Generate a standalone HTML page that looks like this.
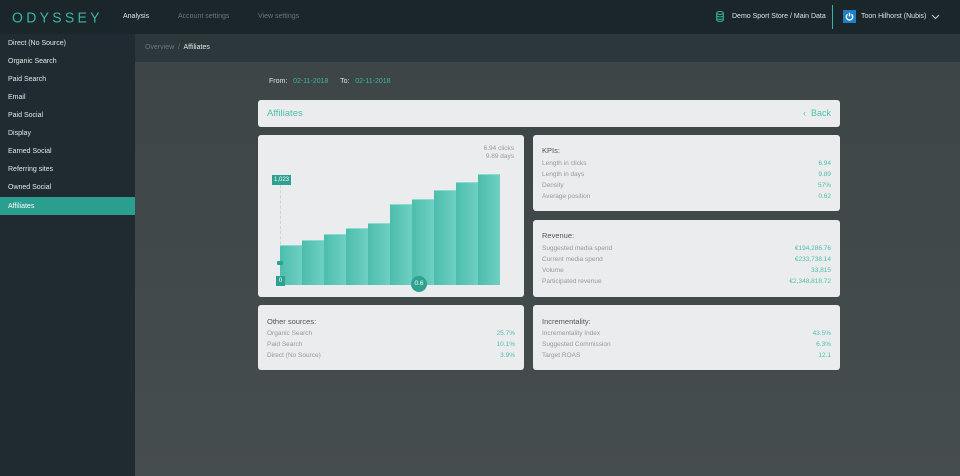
<!DOCTYPE html>
<html><head><meta charset="utf-8"><style>
*{margin:0;padding:0;box-sizing:border-box}
body{width:960px;height:476px;overflow:hidden;font-family:"Liberation Sans",sans-serif;background:#424a4c;position:relative;font-size:7px}
.a{position:absolute}
#top{left:0;top:0;width:960px;height:34px;background:#1b262b}
#side{left:0;top:34px;width:135px;height:442px;background:#1f2b30}
#crumb{left:135px;top:34px;width:825px;height:28px;background:#2c373b}
#main{left:135px;top:62px;width:825px;height:414px;background:linear-gradient(#3d4547,#464d4f)}
.si{position:absolute;left:0;width:135px;height:18px;line-height:19px;padding-left:8px;color:#e4e8e8;font-size:7px}
.card{position:absolute;background:#ebeced;border-radius:3px}
.t{color:#555;font-size:7.5px;position:absolute}
.r{position:absolute;left:9px;right:9px;height:11px;color:#999;font-size:6.5px}
.r b{position:absolute;right:0;font-weight:normal;color:#4fbfae}
.bar{position:absolute;bottom:0;width:22px;background:linear-gradient(90deg,#4dbdac,#6fd0c3);border-top:1px solid #8adbd0}
</style></head><body>
<div class="a" id="top"></div>
<div class="a" style="left:12px;top:9px;color:#3bb3a3;font-size:14px;font-weight:normal;letter-spacing:3.3px;transform:scaleY(1.05)">ODYSSEY</div>
<div class="a" style="left:123px;top:13px;color:#e5e8e8;font-size:7px">Analysis</div>
<div class="a" style="left:178px;top:13px;color:#6c7679;font-size:7px">Account settings</div>
<div class="a" style="left:258px;top:13px;color:#6c7679;font-size:7px">View settings</div>
<svg class="a" style="left:716px;top:11px" width="8" height="11" viewBox="0 0 8 11"><g fill="none" stroke="#3bb3a3" stroke-width="1"><ellipse cx="4" cy="2" rx="3.3" ry="1.5"/><path d="M.7 2v7c0 .8 1.5 1.5 3.3 1.5S7.3 9.8 7.3 9V2M.7 4.5c0 .8 1.5 1.5 3.3 1.5s3.3-.7 3.3-1.5M.7 7c0 .8 1.5 1.5 3.3 1.5S7.3 7.8 7.3 7"/></g></svg>
<div class="a" style="left:732px;top:13px;color:#dfe3e3;font-size:7px">Demo Sport Store / Main Data</div>
<div class="a" style="left:832px;top:5px;width:1px;height:24px;background:#3bb3a3"></div>
<div class="a" style="left:843px;top:10px;width:13px;height:13px;background:#1e7fc6"></div>
<svg class="a" style="left:845px;top:12px" width="9" height="9" viewBox="0 0 9 9"><path d="M2.5 2.3A3.2 3.2 0 1 0 6.5 2.3M4.5 .8V4.5" fill="none" stroke="#fff" stroke-width="1.4"/></svg>
<div class="a" style="left:861px;top:13px;color:#dfe3e3;font-size:7px">Toon Hilhorst (Nubis)</div>
<svg class="a" style="left:931px;top:14px" width="9" height="6"><path d="M1 1l3.5 3.5L8 1" fill="none" stroke="#ccc" stroke-width="1"/></svg>
<div class="a" id="side"></div>
<div class="si" style="top:34px">Direct (No Source)</div>
<div class="si" style="top:52px">Organic Search</div>
<div class="si" style="top:70px">Paid Search</div>
<div class="si" style="top:88px">Email</div>
<div class="si" style="top:106px">Paid Social</div>
<div class="si" style="top:124px">Display</div>
<div class="si" style="top:142px">Earned Social</div>
<div class="si" style="top:160px">Referring sites</div>
<div class="si" style="top:178px">Owned Social</div>
<div class="si" style="top:197px;background:#2a9f90;color:#fff">Affiliates</div>
<div class="a" id="crumb"></div>
<div class="a" style="left:145px;top:44px;color:#6c7679;font-size:7px">Overview &nbsp;/&nbsp; <span style="color:#e5e8e8">Affiliates</span></div>
<div class="a" id="main"></div>
<div class="a" style="left:269px;top:78px;color:#dfe3e3;font-size:7px">From: &nbsp; <span style="color:#3bb3a3">02-11-2018</span> &nbsp; &nbsp; &nbsp;To: &nbsp; <span style="color:#3bb3a3">02-11-2018</span></div>
<div class="card" style="left:258px;top:100px;width:582px;height:27px"><div class="a" style="left:9px;top:8px;color:#4fbfae;font-size:9.5px">Affiliates</div><div class="a" style="right:9px;top:8px;color:#4fbfae;font-size:9px">&#8249; &nbsp;Back</div></div>
<div class="card" style="left:258px;top:135px;width:266px;height:162px">
<div class="a" style="right:10px;top:10px;text-align:right;color:#999;font-size:6.5px;line-height:8px">6.94 clicks<br>9.89 days</div>
<div class="a" style="left:22px;top:40px;height:110px;border-left:1px dashed #b8dcd7"></div>
<div class="a" style="left:22px;top:150px;width:222px;height:0">
<div class="bar" style="left:0;height:40px"></div><div class="bar" style="left:22px;height:45px"></div><div class="bar" style="left:44px;height:51px"></div><div class="bar" style="left:66px;height:57px"></div><div class="bar" style="left:88px;height:62px"></div><div class="bar" style="left:110px;height:81px"></div><div class="bar" style="left:132px;height:86px"></div><div class="bar" style="left:154px;height:95px"></div><div class="bar" style="left:176px;height:103px"></div><div class="bar" style="left:198px;height:111px"></div></div>
<div class="a" style="left:14px;top:40px;width:19px;height:10px;background:#2fa191;color:#fff;font-size:6px;line-height:10px;text-align:center">1,023</div>
<div class="a" style="left:19px;top:126px;width:6px;height:4px;background:#2fa191;border-radius:1px"></div>
<div class="a" style="left:18px;top:141px;width:9px;height:10px;background:#2fa191;color:#fff;font-size:6px;line-height:10px;text-align:center">0</div>
<div class="a" style="left:153px;top:141px;width:16px;height:16px;border-radius:50%;background:#2fa191;color:#fff;font-size:6.5px;line-height:16px;text-align:center">0.6</div>
</div>
<div class="card" style="left:533px;top:135px;width:307px;height:76px"><div class="t" style="left:9px;top:11px">KPIs:</div>
<div class="r" style="top:25px">Length in clicks<b>6.94</b></div><div class="r" style="top:36px">Length in days<b>9.89</b></div><div class="r" style="top:47px">Density<b>57%</b></div><div class="r" style="top:58px">Average position<b>0.62</b></div></div>
<div class="card" style="left:533px;top:220px;width:307px;height:77px"><div class="t" style="left:9px;top:11px">Revenue:</div>
<div class="r" style="top:25px">Suggested media spend<b>€194,286.76</b></div><div class="r" style="top:36px">Current media spend<b>€233,738.14</b></div><div class="r" style="top:47px">Volume<b>33,815</b></div><div class="r" style="top:58px">Participated revenue<b>€2,348,818.72</b></div></div>
<div class="card" style="left:258px;top:305px;width:266px;height:65px"><div class="t" style="left:9px;top:12px">Other sources:</div>
<div class="r" style="top:25px">Organic Search<b>25.7%</b></div><div class="r" style="top:36px">Paid Search<b>10.1%</b></div><div class="r" style="top:47px">Direct (No Source)<b>3.9%</b></div></div>
<div class="card" style="left:533px;top:305px;width:307px;height:65px"><div class="t" style="left:9px;top:12px">Incrementality:</div>
<div class="r" style="top:25px">Incrementality Index<b>43.5%</b></div><div class="r" style="top:36px">Suggested Commission<b>6.3%</b></div><div class="r" style="top:47px">Target ROAS<b>12.1</b></div></div>
</body></html>
